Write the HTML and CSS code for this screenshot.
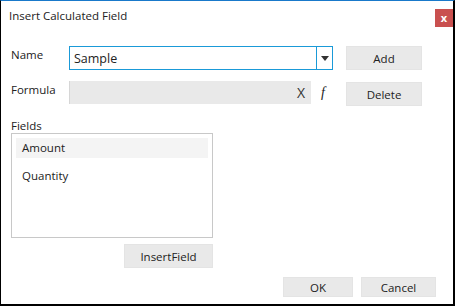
FILE: index.html
```html
<!DOCTYPE html>
<html lang="en">
<head>
    <meta charset="UTF-8">
    <meta name="viewport" content="width=device-width, initial-scale=1.0">
    <title>Insert Calculated Field</title>
    <link rel="stylesheet" href="styles.css">
</head>
<body>
    <div class="dialog">
        <div class="titlebar">
            <span class="title">Insert Calculated Field</span>
            <span class="close">x</span>
        </div>

        <div class="form">
            <div class="row">
                <label class="label">Name</label>
                <div class="combo">
                    <span class="combo-text">Sample</span>
                    <span class="combo-arrow">
                        <svg width="8" height="5" viewBox="0 0 8 5"><path d="M0 0h8L4 5z" fill="#333"/></svg>
                    </span>
                </div>
                <button class="btn side">Add</button>
            </div>

            <div class="row">
                <label class="label">Formula</label>
                <div class="formula">
                    <span class="clear">X</span>
                </div>
                <span class="fx">f</span>
                <button class="btn side delete">Delete</button>
            </div>
        </div>

        <div class="fields">
            <div class="label">Fields</div>
            <div class="listbox">
                <div class="item selected">Amount</div>
                <div class="item">Quantity</div>
            </div>
            <div class="insert-row">
                <button class="btn insert">InsertField</button>
            </div>
        </div>

        <div class="footer">
            <button class="btn ok">OK</button>
            <button class="btn cancel">Cancel</button>
        </div>
    </div>
</body>
</html>
```

FILE: styles.css
```css
* { box-sizing: border-box; }
body { margin: 0; font-family: "Open Sans", "Noto Sans", sans-serif; font-size: 11.5px; color: #222; }
.dialog { width: 455px; height: 306px; border-top: 1px solid #1979ca; border-left: 1px solid #000; border-right: 2px solid #000; border-bottom: 2px solid #000; background: #fff; }

.titlebar { display: flex; justify-content: space-between; align-items: flex-start; height: 45px; }
.title { padding: 7px 0 0 8px; font-size: 11.5px; color: #222; }
.close { margin-top: 8px; width: 18px; height: 18px; background: #c9504f; color: #fff; font-weight: bold; font-size: 11px; display: flex; justify-content: center; align-items: center; line-height: 1; padding-bottom: 2px; }

.form { display: flex; flex-direction: column; gap: 11px; padding-left: 10px; }
.row { display: flex; align-items: flex-start; height: 24px; }
.label { width: 58px; padding-top: 1px; }

.combo { width: 264px; height: 24px; border: 1px solid #1a9ad8; display: flex; align-items: center; }
.combo-text { flex: 1; padding-left: 4px; font-size: 12.5px; }
.combo-arrow { width: 16px; height: 22px; border-left: 1px solid #1a9ad8; display: flex; justify-content: center; align-items: center; }

.formula { width: 242px; height: 23px; background: #e9e9e9; border-left: 1px solid #d6d6d6; display: flex; justify-content: flex-end; align-items: center; padding-right: 6px; }
.clear { font-size: 14px; color: #333; }
.fx { width: 22px; padding-left: 10px; font-family: "Liberation Serif", serif; font-style: italic; font-size: 14px; line-height: 23px; }

.btn { font-family: inherit; font-size: 11.5px; color: #222; background: #e9e9e9; border: 1px solid #e4e4e4; height: 24px; padding: 0; }
.side { width: 76px; margin-left: 13px; }
.delete { margin-left: 13px; margin-top: 1px; }

.fields { padding: 12px 0 0 10px; }
.fields .label { height: 16px; }
.listbox { width: 202px; height: 105px; border: 1px solid #c8c8c8; padding: 4px; }
.item { height: 20px; padding-left: 6px; line-height: 20px; }
.item + .item { margin-top: 8px; }
.selected { background: #f4f4f4; }

.insert-row { display: flex; justify-content: flex-end; width: 202px; margin-top: 6px; }
.insert { width: 89px; }

.footer { display: flex; justify-content: flex-end; gap: 8px; padding-right: 17px; margin-top: 9px; }
.ok { width: 70px; height: 20px; }
.cancel { width: 75px; height: 20px; }
```
